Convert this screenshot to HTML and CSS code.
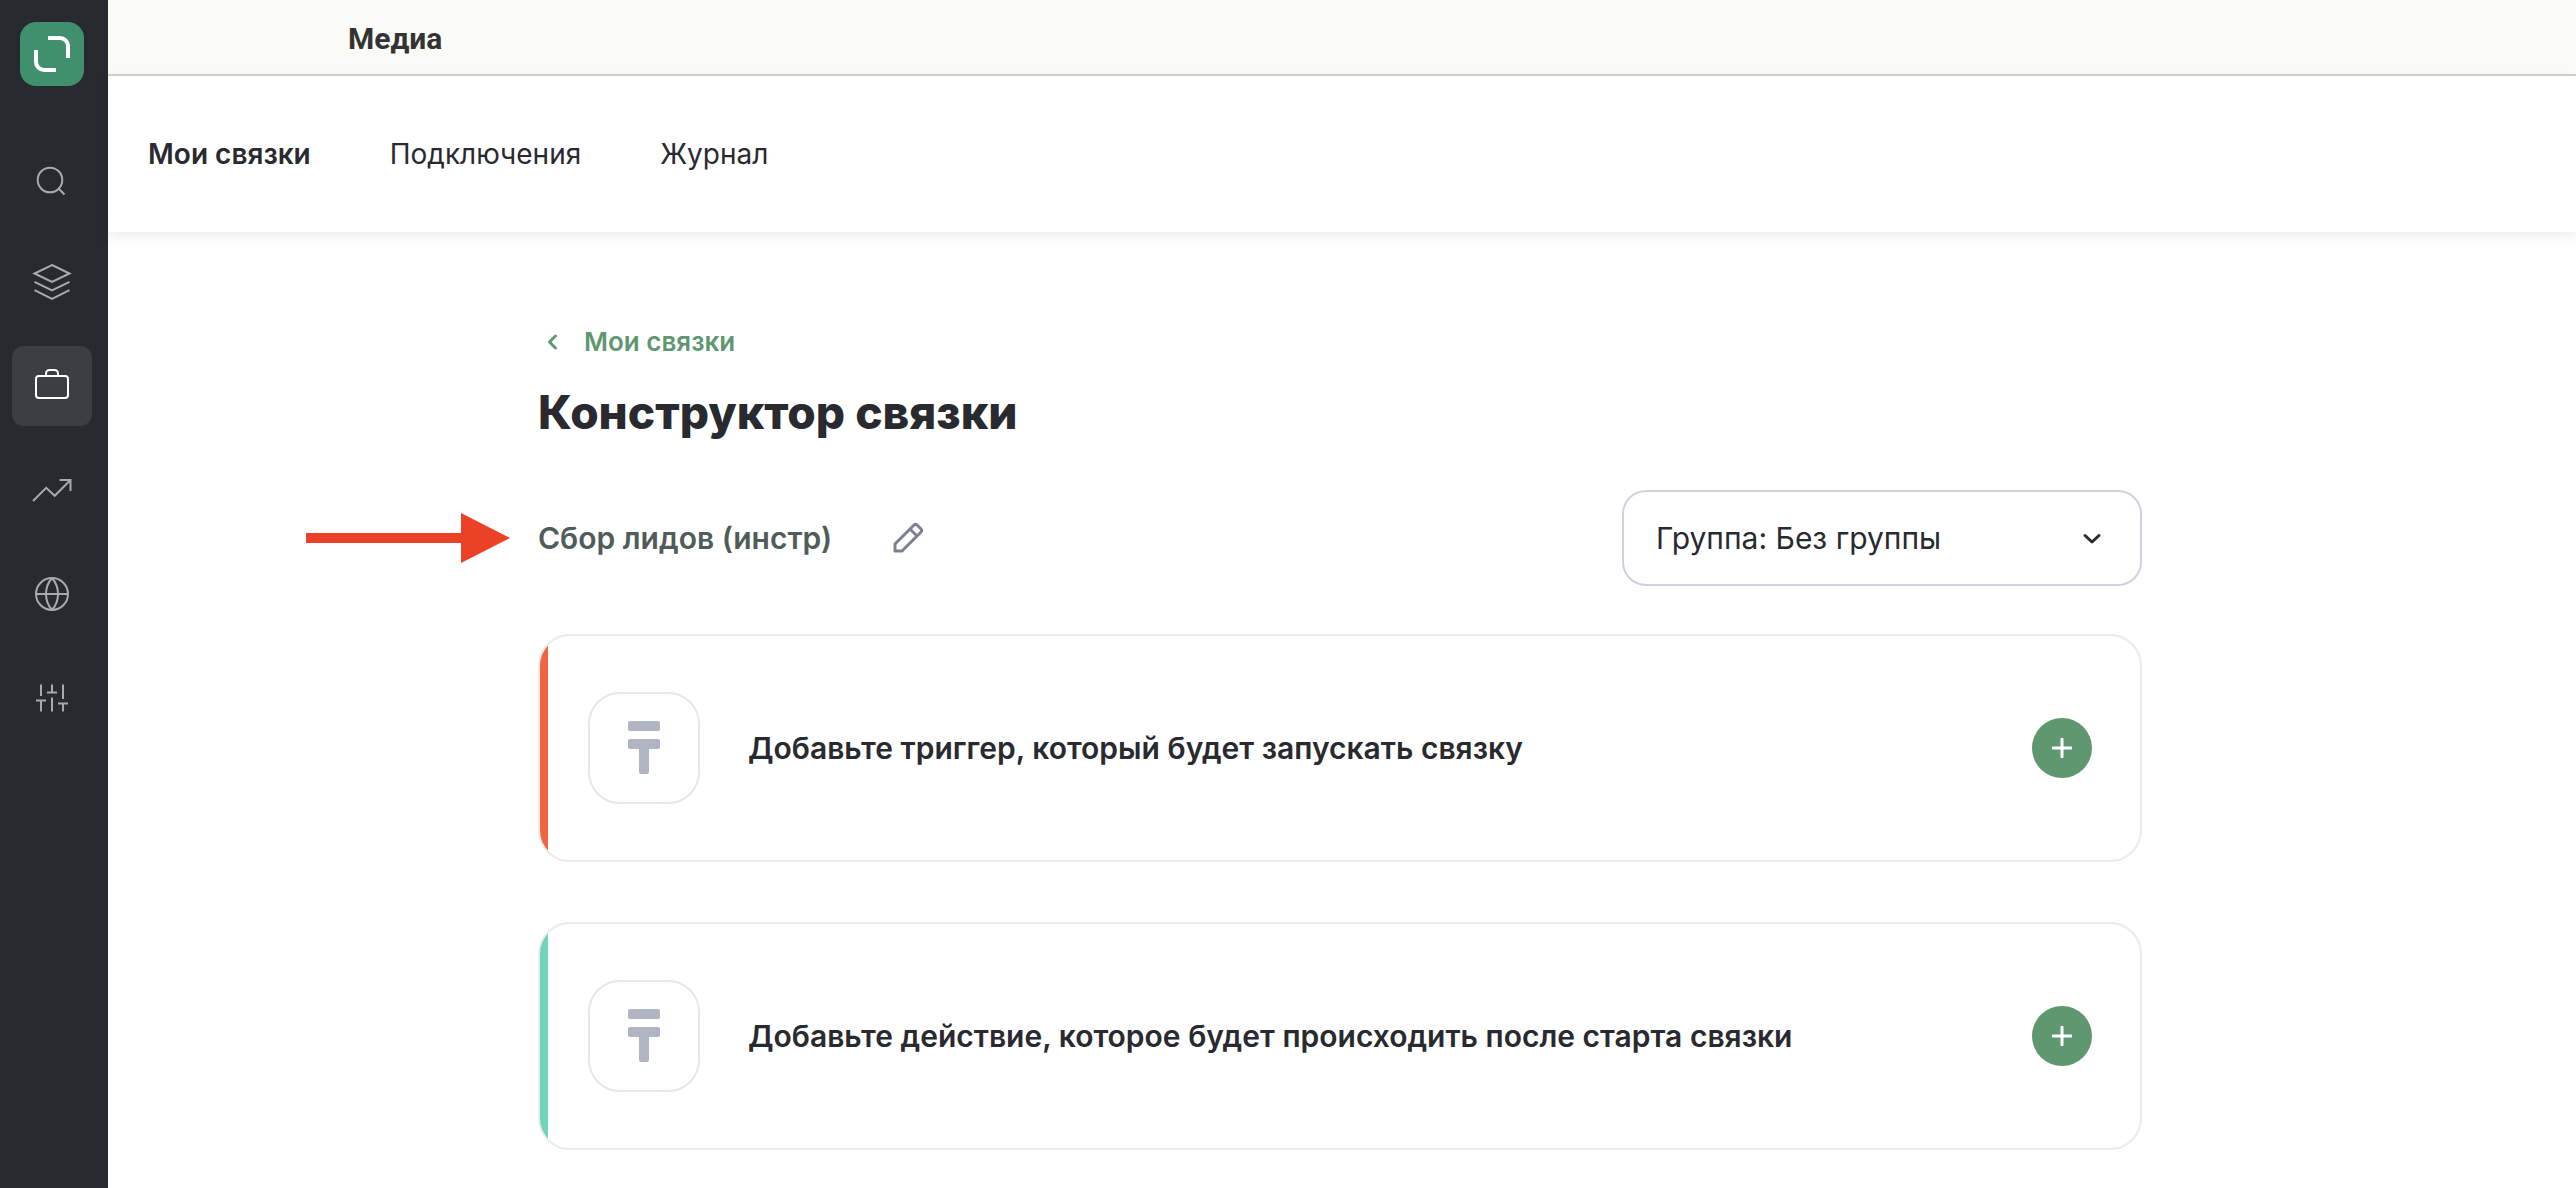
FILE: index.html
```html
<!DOCTYPE html>
<html lang="ru">
<head>
<meta charset="utf-8">
<meta name="viewport" content="width=device-width, initial-scale=1">
<title>Конструктор связки</title>
<link rel="stylesheet" href="styles.css">
</head>
<body>
<div class="app">
  <aside class="sidebar">
    <a class="logo" href="#" aria-label="Главная">
      <svg viewBox="0 0 64 64" width="64" height="64" fill="none" stroke="#fff" stroke-width="4">
        <path d="M28 16h12a8 8 0 0 1 8 8v12M36 48H24a8 8 0 0 1-8-8V28"/>
      </svg>
    </a>
    <nav class="side-nav" aria-label="Разделы">
      <a class="side-link" href="#" aria-label="Поиск">
        <svg viewBox="0 0 80 80"><circle cx="38" cy="42" r="12.300"/><path d="M47 51l5.500 5.500"/></svg>
      </a>
      <a class="side-link" href="#" aria-label="Слои">
        <svg viewBox="0 0 80 80"><path d="M40 23l17.500 8.500L40 40l-17.500-8.500zM22.500 39.800L40 48.300l17.500-8.500M22.500 48.200L40 56.800l17.500-8.600"/></svg>
      </a>
      <a class="side-link side-link-active" href="#" aria-label="Проекты">
        <svg viewBox="0 0 80 80"><rect x="24" y="30" width="32" height="22" rx="3"/><path d="M34 30v-2.500a3.500 3.500 0 0 1 3.500-3.500h5a3.500 3.500 0 0 1 3.500 3.500V30"/></svg>
      </a>
      <a class="side-link" href="#" aria-label="Аналитика">
        <svg viewBox="0 0 80 80"><path d="M21 51l13.200-13.200 8.500 8L58.500 30M47.500 30h11v11"/></svg>
      </a>
      <a class="side-link" href="#" aria-label="Сайты">
        <svg viewBox="0 0 80 80"><circle cx="40" cy="40" r="16"/><path d="M24 40h32M40 24c-8 9-8 23 0 32M40 24c8 9 8 23 0 32"/></svg>
      </a>
      <a class="side-link" href="#" aria-label="Настройки">
        <svg viewBox="0 0 80 80"><path d="M29 26.500V38M24 42.500h10M29 42.500V53.500M40 26.500v8M35 34.500h10M40 39.500v14M51 26.500V41M46 45.500h10M51 45.500v8"/></svg>
      </a>
    </nav>
  </aside>

  <div class="page">
    <div class="topbar">Медиа</div>
    <header class="header">
      <nav class="tabs" aria-label="Связки">
        <a class="tab tab-active" href="#">Мои связки</a>
        <a class="tab" href="#">Подключения</a>
        <a class="tab" href="#">Журнал</a>
      </nav>
    </header>

    <main class="content">
      <a class="back" href="#">
        <svg class="back-icon" viewBox="0 0 28 28" width="28" height="28"><path d="M17.500 8l-6 6 6 6"/></svg>
        Мои связки
      </a>
      <h1 class="title">Конструктор связки</h1>

      <div class="toolbar">
        <div class="name">
          <svg class="pointer" viewBox="0 0 204 50" width="204" height="50" aria-hidden="true"><path d="M0 20h155V0l49 25-49 25V30H0z"/></svg>
          <span class="name-text">Сбор лидов (инстр)</span>
          <button class="edit" type="button" aria-label="Переименовать">
            <svg viewBox="0 0 36 36" width="36" height="36"><path d="M5 31v-7L23.800 5.200a2.500 2.500 0 0 1 3.500 0l3.500 3.500a2.500 2.500 0 0 1 0 3.500L12 31zM20 9l7 7"/></svg>
          </button>
        </div>
        <div class="group">
          <select class="group-select" aria-label="Группа">
            <option>Группа: Без группы</option>
          </select>
          <svg class="group-arrow" viewBox="0 0 20 14" width="20" height="14" aria-hidden="true"><path d="M3 3.500l7 6.500 7-6.500"/></svg>
        </div>
      </div>

      <section class="card card-trigger">
        <div class="card-icon">
          <svg viewBox="0 0 32 54" width="32" height="54"><rect width="32" height="10" rx="2"/><path d="M2 18h28a2 2 0 0 1 2 2v6a2 2 0 0 1-2 2h-9v23a2 2 0 0 1-2 2h-6a2 2 0 0 1-2-2V28H2a2 2 0 0 1-2-2v-6a2 2 0 0 1 2-2z"/></svg>
        </div>
        <h2 class="card-title">Добавьте триггер, который будет запускать связку</h2>
        <button class="add" type="button" aria-label="Добавить триггер">
          <svg viewBox="0 0 20 20" width="20" height="20"><path d="M10 1v18M1 10h18"/></svg>
        </button>
      </section>

      <section class="card card-action">
        <div class="card-icon">
          <svg viewBox="0 0 32 54" width="32" height="54"><rect width="32" height="10" rx="2"/><path d="M2 18h28a2 2 0 0 1 2 2v6a2 2 0 0 1-2 2h-9v23a2 2 0 0 1-2 2h-6a2 2 0 0 1-2-2V28H2a2 2 0 0 1-2-2v-6a2 2 0 0 1 2-2z"/></svg>
        </div>
        <h2 class="card-title">Добавьте действие, которое будет происходить после старта связки</h2>
        <button class="add" type="button" aria-label="Добавить действие">
          <svg viewBox="0 0 20 20" width="20" height="20"><path d="M10 1v18M1 10h18"/></svg>
        </button>
      </section>
    </main>
  </div>
</div>
</body>
</html>
```
FILE: styles.css
```css
* {
  box-sizing: border-box;
}

body {
  margin: 0;
  background: #fff;
  color: #292a30;
  font-family: Inter, "Liberation Sans", sans-serif;
  font-size: 28px;
  line-height: 36px;
}

a {
  color: inherit;
  text-decoration: none;
}

button {
  padding: 0;
  border: 0;
  background: none;
  cursor: pointer;
}

svg {
  display: block;
}

.app {
  display: flex;
  min-height: 100vh;
}

/* Sidebar */
.sidebar {
  flex: none;
  display: flex;
  flex-direction: column;
  align-items: center;
  gap: 52px;
  width: 108px;
  padding: 22px 4px 22px 0;
  background: #292a30;
}

.logo {
  border-radius: 16px;
  background: #408f6d;
}

.side-nav {
  display: flex;
  flex-direction: column;
  gap: 24px;
}

.side-link {
  width: 80px;
  height: 80px;
  border-radius: 12px;
  color: #a9aaac;
}

.side-link svg {
  fill: none;
  stroke: currentColor;
  stroke-width: 2;
}

.side-link-active {
  background: #3b3e43;
  color: #fff;
}

/* Top of the page */
.page {
  flex: 1;
  min-width: 0;
}

.topbar {
  padding: 21px 240px 17px;
  border-bottom: 2px solid #d2d2d0;
  background: #fafbf6;
  color: #333;
  font-family: Roboto, sans-serif;
  font-size: 30px;
  font-weight: 700;
}

.header {
  padding: 60px 40px;
  box-shadow: 0 4px 12px rgba(0, 0, 0, 0.08);
}

.tabs {
  display: flex;
  gap: 79px;
}

.tab-active {
  font-weight: 600;
}

/* Content */
.content {
  max-width: 1608px;
  margin: 0 auto;
  padding: 92px 4px 38px 0;
}

.back {
  display: inline-flex;
  align-items: center;
  gap: 18px;
  color: #5f9770;
  font-size: 26px;
  font-weight: 600;
}

.back-icon {
  fill: none;
  stroke: currentColor;
  stroke-width: 3;
  stroke-linecap: round;
  stroke-linejoin: round;
}

.title {
  margin: 18px 0 48px;
  font-size: 46px;
  font-weight: 800;
  line-height: 60px;
}

.toolbar {
  display: flex;
  align-items: center;
  justify-content: space-between;
  margin-bottom: 48px;
}

.name {
  position: relative;
  display: flex;
  align-items: center;
  gap: 58px;
  color: #505c59;
  font-size: 30px;
  font-weight: 600;
}

/* Callout arrow laid over the page margin */
.pointer {
  position: absolute;
  right: 100%;
  margin-right: 28px;
  fill: #eb4127;
}

.edit svg {
  fill: none;
  stroke: #7c8093;
  stroke-width: 3;
  stroke-linejoin: round;
}

.group {
  position: relative;
  width: 520px;
}

.group-select {
  width: 100%;
  height: 96px;
  padding: 0 80px 0 32px;
  border: 2px solid #cfd1dc;
  border-radius: 24px;
  appearance: none;
  background: #fff;
  color: inherit;
  font: inherit;
  font-size: 30px;
}

.group-arrow {
  position: absolute;
  top: 42px;
  right: 40px;
  fill: none;
  stroke: #292a30;
  stroke-width: 3;
  stroke-linecap: round;
  stroke-linejoin: round;
  pointer-events: none;
}

.card {
  display: flex;
  align-items: center;
  gap: 48px;
  overflow: hidden;
  padding: 56px 48px;
  border: 2px solid #ebebeb;
  border-radius: 32px;
}

.card + .card {
  margin-top: 60px;
}

.card-trigger {
  background: linear-gradient(to right, #ee663f 8px, #fff 8px);
}

.card-action {
  background: linear-gradient(to right, #6ed5ba 8px, #fff 8px);
}

.card-icon {
  flex: none;
  display: grid;
  place-items: center;
  width: 112px;
  height: 112px;
  border: 2px solid #e6e7ec;
  border-radius: 32px;
  fill: #b1b5c3;
}

.card-title {
  flex: 1;
  margin: 0;
  font-size: 30px;
  font-weight: 600;
}

.add {
  flex: none;
  display: grid;
  place-items: center;
  width: 60px;
  height: 60px;
  border-radius: 50%;
  background: #5f9770;
}

.add svg {
  fill: none;
  stroke: #fff;
  stroke-width: 3;
  stroke-linecap: round;
}
```
